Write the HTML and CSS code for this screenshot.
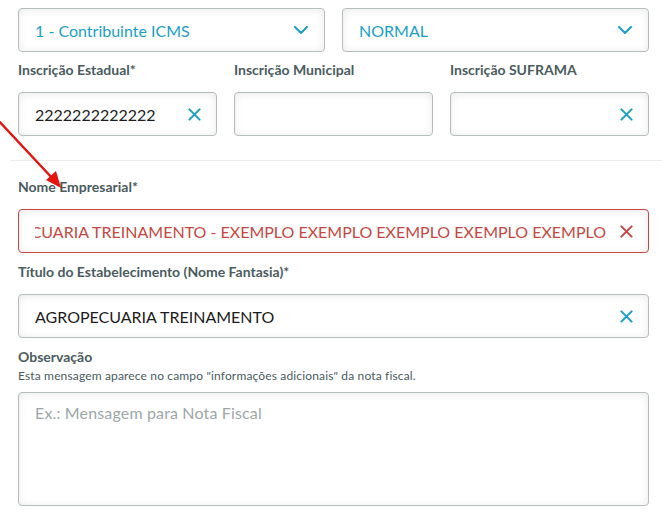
FILE: index.html
```html
<!DOCTYPE html>
<html lang="pt-BR">
<head>
<meta charset="utf-8">
<title>Dados fiscais</title>
<link rel="stylesheet" href="styles.css">
</head>
<body>
<form class="form">
  <div class="row two">
    <div class="field select">
      <span class="value accent">1 - Contribuinte ICMS</span>
      <svg class="chev" viewBox="0 0 14 8" width="14" height="8"><path d="M1 1l6 6 6-6" fill="none" stroke="#1a9fc7" stroke-width="2" stroke-linecap="round" stroke-linejoin="round"/></svg>
    </div>
    <div class="field select">
      <span class="value accent">NORMAL</span>
      <svg class="chev" viewBox="0 0 14 8" width="14" height="8"><path d="M1 1l6 6 6-6" fill="none" stroke="#1a9fc7" stroke-width="2" stroke-linecap="round" stroke-linejoin="round"/></svg>
    </div>
  </div>

  <div class="row three">
    <div class="group">
      <label class="label">Inscrição Estadual*</label>
      <div class="field">
        <span class="value">2222222222222</span>
        <svg class="clear" viewBox="0 0 14 14" width="13" height="13"><path d="M1.5 1.5l11 11M12.5 1.5l-11 11" stroke="#1a9fc7" stroke-width="2.2" stroke-linecap="round"/></svg>
      </div>
    </div>
    <div class="group">
      <label class="label">Inscrição Municipal</label>
      <div class="field"></div>
    </div>
    <div class="group">
      <label class="label">Inscrição SUFRAMA</label>
      <div class="field end">
        <svg class="clear" viewBox="0 0 14 14" width="13" height="13"><path d="M1.5 1.5l11 11M12.5 1.5l-11 11" stroke="#1a9fc7" stroke-width="2.2" stroke-linecap="round"/></svg>
      </div>
    </div>
  </div>

  <hr class="divider">

  <div class="stack">
    <div class="group">
      <label class="label">Nome Empresarial*</label>
      <div class="field error">
        <div class="scroll"><span class="value">AGROPECUARIA TREINAMENTO - EXEMPLO EXEMPLO EXEMPLO EXEMPLO EXEMPLO</span></div>
        <svg class="clear" viewBox="0 0 14 14" width="13" height="13"><path d="M1.5 1.5l11 11M12.5 1.5l-11 11" stroke="#c64840" stroke-width="2.2" stroke-linecap="round"/></svg>
      </div>
    </div>

    <div class="group">
      <label class="label">Título do Estabelecimento (Nome Fantasia)*</label>
      <div class="field">
        <span class="value">AGROPECUARIA TREINAMENTO</span>
        <svg class="clear" viewBox="0 0 14 14" width="13" height="13"><path d="M1.5 1.5l11 11M12.5 1.5l-11 11" stroke="#1a9fc7" stroke-width="2.2" stroke-linecap="round"/></svg>
      </div>
    </div>

    <div class="group">
      <label class="label">Observação</label>
      <p class="help">Esta mensagem aparece no campo "informações adicionais" da nota fiscal.</p>
      <div class="field area"><span class="placeholder">Ex.: Mensagem para Nota Fiscal</span></div>
    </div>
  </div>

  <svg class="pointer" viewBox="0 0 70 80" width="70" height="80">
    <line x1="-2" y1="0" x2="54" y2="60" stroke="#e8120c" stroke-width="2.4"/>
    <path d="M61 68 L46 60 L56 51 Z" fill="#e8120c"/>
  </svg>
</form>
</body>
</html>
```

FILE: styles.css
```css
* { box-sizing: border-box; }

html, body {
  margin: 0;
  background: #fff;
}

body {
  font-family: Lato, "Open Sans", sans-serif;
  color: #1c1c1c;
  width: 662px;
  height: 513px;
  overflow: hidden;
}

.form {
  position: relative;
  padding: 8px 13px 0 18px;
}

.row {
  display: grid;
  column-gap: 17px;
}
.row.two { grid-template-columns: 1fr 1fr; }
.row.three { grid-template-columns: 1fr 1fr 1fr; margin-top: 8px; }

.stack {
  display: flex;
  flex-direction: column;
  gap: 9px;
}

.label {
  display: block;
  font-size: 14px;
  font-weight: 700;
  line-height: 20px;
  color: #4a5c60;
  margin-bottom: 12px;
}

.field {
  display: flex;
  align-items: center;
  height: 44px;
  padding: 0 15px 0 16px;
  border: 1px solid #b6bdbf;
  border-radius: 4px;
  background: #fff;
  box-shadow: inset 0 1px 8px rgba(0, 0, 0, 0.09);
}
.field.end { justify-content: flex-end; }

.value {
  flex: 1;
  font-size: 16px;
  white-space: nowrap;
}
.value.accent { color: #1a9fc7; }

.chev { margin-right: 1px; }
.clear { flex: none; margin-left: 12px; }

.divider {
  border: 0;
  border-top: 1px solid #ededed;
  margin: 24px -13px 16px -8px;
}

.field.error {
  border-color: #c64840;
  color: #c64840;
}
.scroll {
  flex: 1;
  display: flex;
  justify-content: flex-end;
  overflow: hidden;
  margin-right: 2px;
}
.scroll .value { flex: none; }

.help {
  margin: -11px 0 8px;
  font-size: 12px;
  letter-spacing: 0.15px;
  line-height: 16px;
  color: #4a5c60;
}

.field.area {
  height: 114px;
  align-items: flex-start;
  padding-top: 9px;
}
.placeholder {
  font-size: 16px;
  line-height: 22px;
  letter-spacing: 0.15px;
  color: #9da7a9;
}

.pointer {
  position: absolute;
  left: 0;
  top: 120px;
  overflow: visible;
}
```
